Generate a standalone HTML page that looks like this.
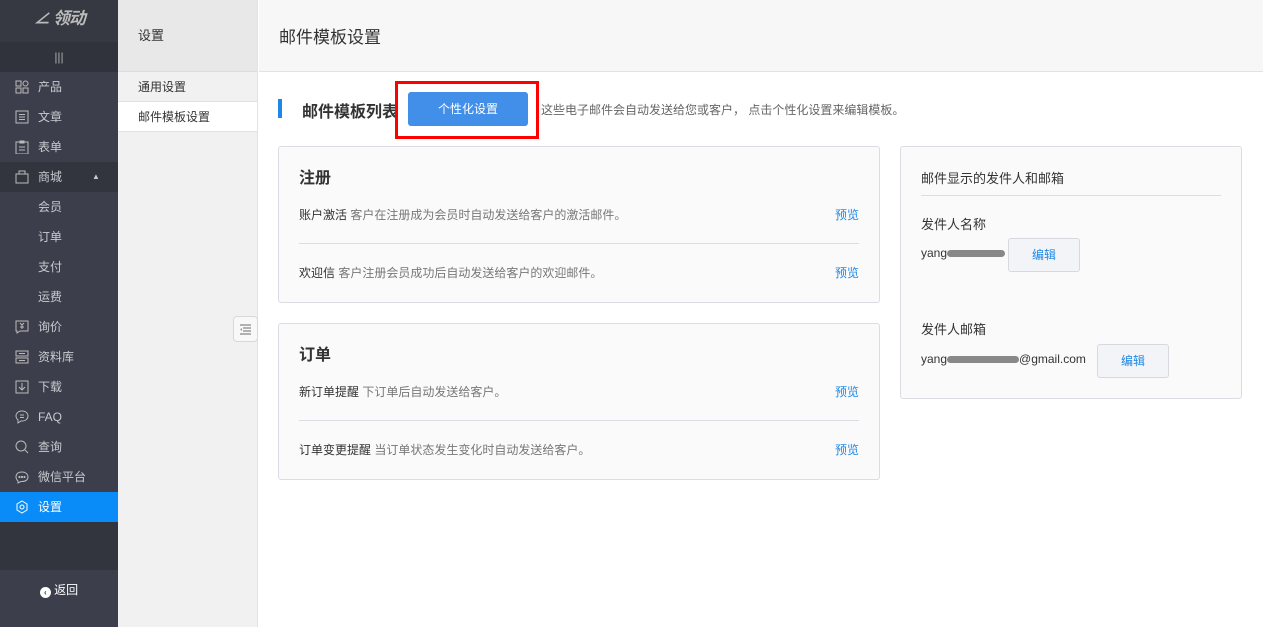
<!DOCTYPE html>
<html><head><meta charset="utf-8"><style>
*{margin:0;padding:0;box-sizing:border-box}
body{width:1263px;height:627px;overflow:hidden;font-family:"Liberation Sans","Noto Sans CJK SC",sans-serif;font-size:12px;color:#333;background:#fff;position:relative}
.sb{position:absolute;left:0;top:0;width:118px;height:627px;background:#3c3e4b}
.logo{height:42px;background:#363842;color:#bbb;font-style:italic;font-weight:bold;font-size:17px;text-align:center;line-height:38px;letter-spacing:-1px}
.tog{height:30px;background:#30323c;color:#aaa;text-align:center;line-height:30px;font-size:12px}
.mi{height:30px;line-height:30px;color:#c9cad0;font-size:12px;padding-left:38px;position:relative}
.mi svg{position:absolute;left:15px;top:8px}
.mi.dk{background:#32343e}
.mi.act{background:#0a8cf8;color:#fff}
.sbb{position:absolute;left:0;top:522px;width:118px;height:48px;background:#32343e}
.ret{position:absolute;left:0;top:570px;width:118px;height:40px;line-height:40px;text-align:center;color:#fff;font-size:12px}
.c2{position:absolute;left:118px;top:0;width:140px;height:627px;background:#f1f1f1;border-right:1px solid #e3e3e3}
.c2h{height:72px;background:#e9e8e9;line-height:72px;padding-left:20px;font-size:13px;color:#333;border-bottom:1px solid #ddd}
.c2i{height:30px;line-height:30px;padding-left:20px;border-bottom:1px solid #e1e1e1}
.c2i.on{background:#fff}
.cb{position:absolute;left:233px;top:316px;width:25px;height:26px;border:1px solid #d8d8d8;border-radius:4px;background:#f8f8f8}
.mh{position:absolute;left:259px;top:0;right:0;height:72px;background:#f7f7f7;border-bottom:1px solid #e3e3e3;line-height:76px;padding-left:20px;font-size:17px;color:#333}
.bar{position:absolute;left:278px;top:99px;width:4px;height:19px;background:#1e88e5}
.tt{position:absolute;left:302px;top:98px;font-size:16px;font-weight:bold;color:#333}
.btn{position:absolute;left:408px;top:92px;width:120px;height:34px;background:#418fe8;border-radius:3px;color:#fff;text-align:center;line-height:34px;font-size:12px}
.red{position:absolute;left:395px;top:81px;width:144px;height:58px;border:3px solid #f00}
.desc{position:absolute;left:541px;top:101px;color:#666;font-size:12px}
.card{position:absolute;left:278px;width:602px;background:#fafafb;border:1px solid #dcdce4;border-radius:3px}
.card h3{position:absolute;left:20px;top:17px;font-size:16px;font-weight:bold;color:#333}
.row{position:absolute;left:20px;right:20px;height:20px;font-size:12px}
.row .g{color:#777}
.row .p{position:absolute;right:0;color:#1e88e5}
.hr{position:absolute;left:20px;right:20px;height:1px;background:#dcdce4}
.rc{position:absolute;left:900px;top:146px;width:342px;height:253px;background:#fafafb;border:1px solid #dcdce4;border-radius:3px}
.rc div{position:absolute}
.eb{width:72px;height:34px;border:1px solid #d8d8de;border-radius:3px;background:#f3f4f8;color:#1e88e5;text-align:center;line-height:32px}
.blur{display:inline-block;background:#888;height:7px;border-radius:4px;vertical-align:middle}
</style></head><body>
<div class="sb">
<div class="logo">∠ 领动</div>
<div class="tog">|||</div>
<div class="mi"><svg width="14" height="14" fill="none" stroke="#bbb"><rect x="1" y="1" width="5" height="5"/><circle cx="10.5" cy="3.5" r="2.5"/><rect x="1" y="8" width="5" height="5"/><rect x="8" y="8" width="5" height="5"/></svg>产品</div>
<div class="mi"><svg width="14" height="14" fill="none" stroke="#bbb"><rect x="1" y="1" width="12" height="12"/><path d="M4 4.5h6M4 7h6M4 9.5h6"/></svg>文章</div>
<div class="mi"><svg width="14" height="14" fill="none" stroke="#bbb"><path d="M1 2h12v12H1zM5 1h4v2H5zM4 7h6M4 10h6"/></svg>表单</div>
<div class="mi dk"><svg width="14" height="14" fill="none" stroke="#bbb"><path d="M1 4h12v9H1zM4 4V1h6v3"/></svg>商城<span style="position:absolute;left:92px;font-size:8px">▲</span></div>
<div class="mi">会员</div><div class="mi">订单</div><div class="mi">支付</div><div class="mi">运费</div>
<div class="mi"><svg width="14" height="14" fill="none" stroke="#bbb"><path d="M1 1h12v10H5l-3 2v-2H1z"/><path d="M5 3l2 2 2-2M7 5v4M5 7h4"/></svg>询价</div>
<div class="mi"><svg width="14" height="14" fill="none" stroke="#bbb"><rect x="1" y="1" width="12" height="5"/><rect x="1" y="8" width="12" height="5"/><path d="M4 3.5h6M4 10.5h6"/></svg>资料库</div>
<div class="mi"><svg width="14" height="14" fill="none" stroke="#bbb"><rect x="1" y="1" width="12" height="12"/><path d="M7 3v7M4 7l3 3 3-3"/></svg>下载</div>
<div class="mi"><svg width="14" height="14" fill="none" stroke="#bbb"><path d="M7 1C3 1 1 3.5 1 6c0 2 1 3 2 4v3l3-2h1c4 0 6-2.5 6-5S11 1 7 1zM5 5h4M5 7.5h4"/></svg>FAQ</div>
<div class="mi"><svg width="14" height="14" fill="none" stroke="#bbb"><circle cx="6" cy="6" r="5"/><path d="M10 10l3 3"/></svg>查询</div>
<div class="mi"><svg width="14" height="14" fill="none" stroke="#bbb"><path d="M7 2C3 2 1 4 1 7c0 2 1 3 2 4v2l3-1.5h1c4 0 6-2 6-4.5S11 2 7 2z"/><circle cx="4.5" cy="7" r=".6"/><circle cx="7" cy="7" r=".6"/><circle cx="9.5" cy="7" r=".6"/></svg>微信平台</div>
<div class="mi act"><svg width="14" height="14" fill="none" stroke="#fff"><path d="M7 1l5 3v6l-5 3-5-3V4z"/><circle cx="7" cy="7" r="2"/></svg>设置</div>
</div>
<div class="sbb"></div>
<div class="ret"><span style="display:inline-block;width:11px;height:11px;border-radius:50%;background:#fff;color:#3c3e4b;font-size:8px;line-height:11px;vertical-align:-1px;font-weight:bold">‹</span> 返回</div>
<div class="c2">
<div class="c2h">设置</div>
<div class="c2i">通用设置</div>
<div class="c2i on">邮件模板设置</div>
</div>
<div class="cb"><svg width="23" height="24"><path d="M6 8h11M9 11h8M9 14h8M6 17h11" stroke="#999" stroke-width="1.5"/><path d="M8 11v3l-2-1.5z" fill="#999"/></svg></div>
<div class="mh">邮件模板设置</div>
<div class="bar"></div>
<div class="tt">邮件模板列表</div>
<div class="btn">个性化设置</div>
<div class="red"></div>
<div class="desc">这些电子邮件会自动发送给您或客户， 点击个性化设置来编辑模板。</div>
<div class="card" style="top:146px;height:157px">
<h3>注册</h3>
<div class="row" style="top:59px">账户激活 <span class="g">客户在注册成为会员时自动发送给客户的激活邮件。</span><span class="p">预览</span></div>
<div class="hr" style="top:96px"></div>
<div class="row" style="top:117px">欢迎信 <span class="g">客户注册会员成功后自动发送给客户的欢迎邮件。</span><span class="p">预览</span></div>
</div>
<div class="card" style="top:323px;height:157px">
<h3>订单</h3>
<div class="row" style="top:59px">新订单提醒 <span class="g">下订单后自动发送给客户。</span><span class="p">预览</span></div>
<div class="hr" style="top:96px"></div>
<div class="row" style="top:117px">订单变更提醒 <span class="g">当订单状态发生变化时自动发送给客户。</span><span class="p">预览</span></div>
</div>
<div class="rc">
<div style="left:20px;top:21px;font-size:13px">邮件显示的发件人和邮箱</div>
<div style="left:20px;right:20px;top:48px;height:1px;background:#dcdce4"></div>
<div style="left:20px;top:67px;font-size:13px">发件人名称</div>
<div style="left:20px;top:99px">yang<span class="blur" style="width:58px"></span></div>
<div class="eb" style="left:107px;top:91px">编辑</div>
<div style="left:20px;top:172px;font-size:13px">发件人邮箱</div>
<div style="left:20px;top:205px">yang<span class="blur" style="width:72px"></span>@gmail.com</div>
<div class="eb" style="left:196px;top:197px">编辑</div>
</div>
</body></html>
